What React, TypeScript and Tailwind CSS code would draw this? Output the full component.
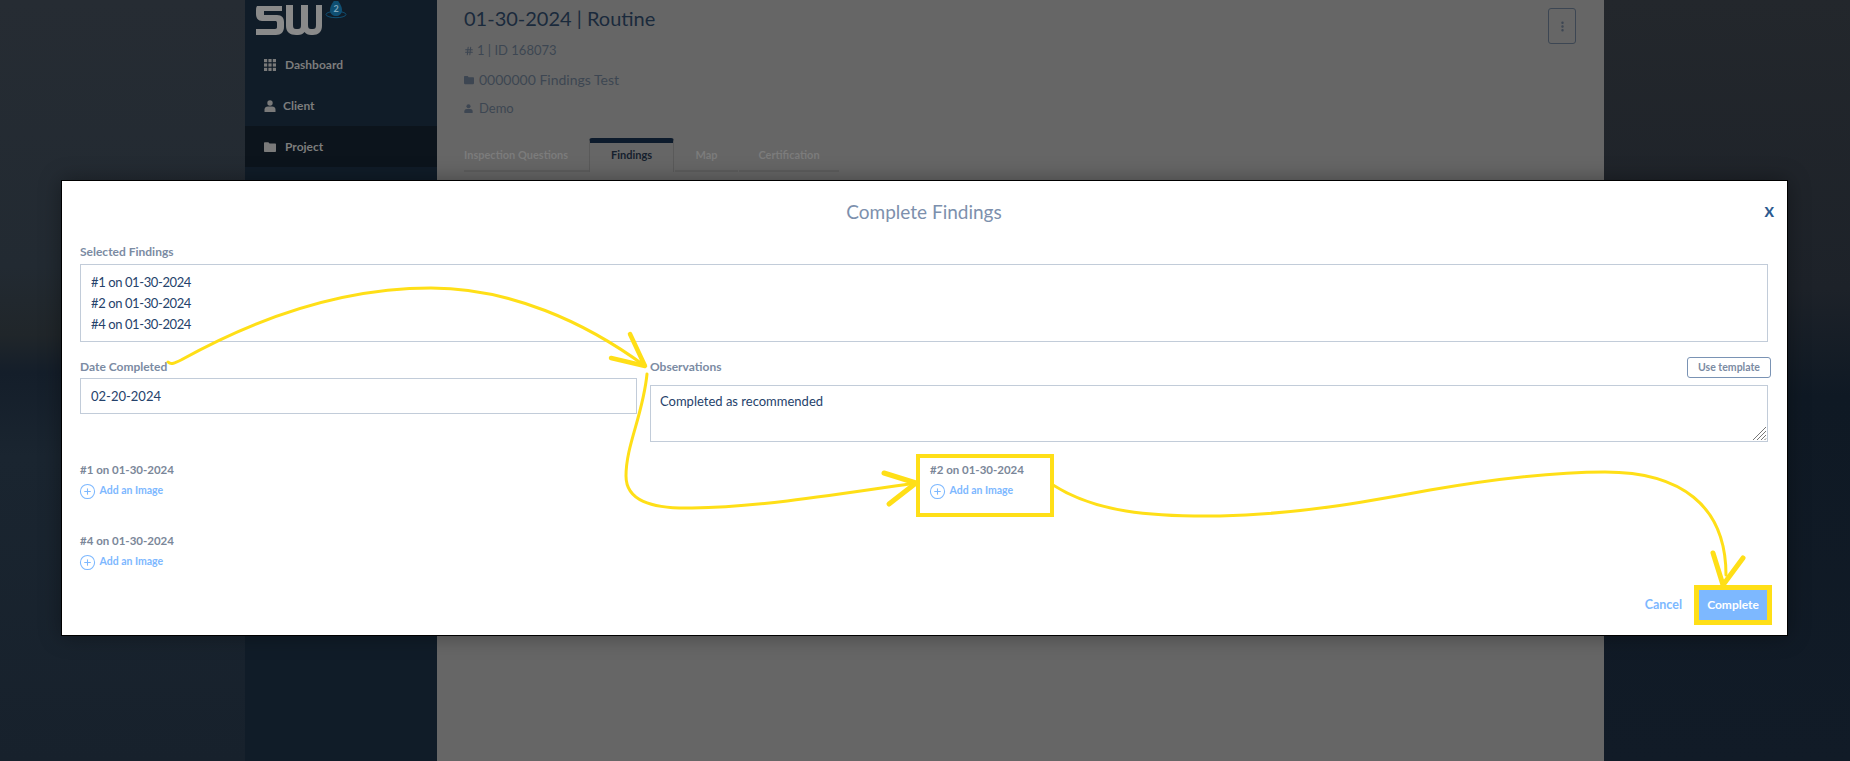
import { CirclePlus, EllipsisVertical, Hash } from "lucide-react";

const font = { fontFamily: '"Lato", "Open Sans", sans-serif' };

function GridIcon() {
  return (
    <svg width="12" height="12" viewBox="0 0 12 12" fill="#7a7a7a">
      {[0, 4.4, 8.8].map((y) =>
        [0, 4.4, 8.8].map((x) => <rect key={`${x}-${y}`} x={x} y={y} width="3.2" height="3.2" />)
      )}
    </svg>
  );
}

function UserIcon({ color, size = 12 }: { color: string; size?: number }) {
  return (
    <svg width={size} height={size} viewBox="0 0 12 12" fill={color}>
      <circle cx="6" cy="3" r="2.7" />
      <path d="M0.5 12V9.6C0.5 7.8 2 6.6 3.8 6.6H8.2C10 6.6 11.5 7.8 11.5 9.6V12Z" />
    </svg>
  );
}

function FolderIcon({ color, size = 12 }: { color: string; size?: number }) {
  return (
    <svg width={size} height={size} viewBox="0 0 12 12" fill={color}>
      <path d="M0 2.2C0 1.6 0.4 1.2 1 1.2H4.4L5.6 2.6H11C11.6 2.6 12 3 12 3.6V10C12 10.6 11.6 11 11 11H1C0.4 11 0 10.6 0 10Z" />
    </svg>
  );
}

function Logo() {
  return (
    <svg width="96" height="36" viewBox="0 0 96 36">
      <path
        d="M2 5H27V10H9V14H22C27 14 29 17 29 21V26C29 31 26 34 21 34H1V28H20C21.5 28 22 27 22 26V22C22 20.5 21.5 20 20 20H7C3 20 1 17 1 13V9C1 6 2 5 2 5Z"
        fill="#8a8a8a"
      />
      <path
        d="M31 4H38V24C38 27 39 28 41 28H43C45 28 46 27 46 24V4H53V24C53 27 54 28 56 28H58C60 28 61 27 61 24V4H67V25C67 31 63 34 58 34H56C53 34 51 33 49.5 31C48 33 46 34 43 34H41C35 34 31 31 31 25Z"
        fill="#8a8a8a"
      />
      <path d="M81 -3C84 1 87 5 87 9C87 13 84 15 81 15C78 15 75 13 75 9C75 5 78 1 81 -3Z" fill="#0f4f73" />
      <ellipse cx="81" cy="13.5" rx="10" ry="3.2" fill="none" stroke="#0f4f73" strokeWidth="1" />
      <text x="81" y="11" fontSize="9" fontWeight="700" fill="#7fa6bb" textAnchor="middle" style={font}>
        2
      </text>
    </svg>
  );
}

function NavItem({ icon, label, active, gap }: { icon: React.ReactNode; label: string; active?: boolean; gap: string }) {
  return (
    <div className={`h-[41px] pl-[19px] flex items-center ${gap} ${active ? "bg-[#0c141c]" : ""}`}>
      {icon}
      <span className="text-[12px] font-bold text-[#7d7d7d]">{label}</span>
    </div>
  );
}

function AddImage() {
  return (
    <div className="flex items-center gap-[4px] h-[14px] mt-[6px] text-[#7db8ff]">
      <CirclePlus size={17} strokeWidth={1.5} className="-ml-[1.5px]" />
      <span className="text-[10.5px] font-bold">Add an Image</span>
    </div>
  );
}

function FindingImage({ label, className }: { label: string; className?: string }) {
  return (
    <div className={className}>
      <div className="h-[16px] leading-[16px] text-[11.5px] font-bold text-[#7b8799]">{label}</div>
      <AddImage />
    </div>
  );
}

function Annotations() {
  const stroke = "#ffdf17";
  return (
    <svg className="absolute left-0 top-0 pointer-events-none" width="1850" height="761" fill="none" stroke={stroke} strokeLinecap="round" strokeLinejoin="round">
      <path strokeWidth="3" d="M168 362C171 365 175 363 181 360C262 315 345 288 431 288C510 288 585 322 645 366" />
      <path strokeWidth="4.5" d="M630 334L645 366L611 358" />
      <path strokeWidth="3" d="M647 374C643 415 626 445 626 476C626 500 650 509 692 508C760 507 840 494 916 483" />
      <path strokeWidth="5" d="M884 473L916 483L889 504" />
      <path strokeWidth="3" d="M1053 485C1095 512 1150 517 1220 516C1300 514 1365 502 1430 490C1500 478 1560 472 1605 472C1680 472 1726 505 1726 575" />
      <path strokeWidth="5" d="M1713 553L1723 585L1743 558" />
    </svg>
  );
}

export default function App() {
  return (
    <div className="relative w-[1850px] h-[761px] overflow-hidden flex" style={font}>
      <div className="w-[245px] bg-[linear-gradient(180deg,#262c33_0%,#222a32_35%,#20262a_44%,#141e2a_49%,#1a2530_60%,#17212c_100%)]" />

      <aside className="w-[192px] bg-[#101c28]">
        <div className="h-[44px] pl-[10px] pt-[1px]">
          <Logo />
        </div>
        <div>
          <NavItem icon={<GridIcon />} label="Dashboard" gap="gap-[9px]" />
          <NavItem icon={<UserIcon color="#7a7a7a" />} label="Client" gap="gap-[7px]" />
          <NavItem icon={<FolderIcon color="#7a7a7a" />} label="Project" active gap="gap-[9px]" />
        </div>
      </aside>

      <main className="w-[1167px] bg-[#666666] pl-[27px] pr-[28px] relative">
        <div className="flex justify-between">
          <div>
            <h1 className="h-[37px] leading-[37px] text-[20px] text-[#1a2a3c]">01-30-2024 | Routine</h1>
            <div className="flex flex-col">
              <div className="h-[28px] flex items-center gap-[3px] text-[13px] text-[#3d4652]">
                <Hash size={10} strokeWidth={2.5} />
                <span>1 | ID 168073</span>
              </div>
              <div className="h-[29px] flex items-center gap-[5px] text-[14px] text-[#3d4652]">
                <FolderIcon color="#3d4652" size={10} />
                <span>0000000 Findings Test</span>
              </div>
              <div className="h-[29px] flex items-center gap-[6px] text-[13px] text-[#3d4652]">
                <UserIcon color="#3d4652" size={9} />
                <span>Demo</span>
              </div>
            </div>
          </div>
          <div className="mt-[8px] w-[28px] h-[36px] border border-[#3c4653] rounded-[3px] flex items-center justify-center text-[#3c4653]">
            <EllipsisVertical size={13} strokeWidth={2.5} />
          </div>
        </div>

        <div className="mt-[15px] flex items-end h-[34px] text-[11px] font-bold text-[#7c7c7c]">
          <div className="w-[125px] h-[34px] flex flex-col justify-between">
            <span className="leading-[30px] mt-[2px]">Inspection Questions</span>
            <div className="h-[3px] bg-[#5d5d5d]" />
          </div>
          <div className="w-[85px] h-[34px] rounded-t-[3px] border-t-[5px] border-t-[#0d1b2c] border-x border-x-[#5a5a5a] text-center leading-[24px] text-[#15202d]">Findings</div>
          <div className="w-[63px] ml-[1px] h-[34px] flex flex-col justify-between items-center">
            <span className="leading-[30px] mt-[2px]">Map</span>
            <div className="h-[3px] bg-[#5d5d5d] w-full" />
          </div>
          <div className="w-[100px] ml-[1px] h-[34px] flex flex-col justify-between items-center">
            <span className="leading-[30px] mt-[2px]">Certification</span>
            <div className="h-[3px] bg-[#5d5d5d] w-full" />
          </div>
        </div>
      </main>

      <div className="flex-1 bg-[linear-gradient(180deg,#23272c_0%,#1d2229_38%,#0f1924_52%,#111b27_100%)]" />

      {/* modal dialog */}
      <section className="absolute left-[61px] top-[180px] w-[1727px] h-[456px] bg-white border border-black shadow-[0_0_20px_rgba(0,0,0,0.35)] pl-[18px] pr-[19px]">
        <div className="relative h-[62px] flex items-center justify-center">
          <h2 className="text-[19px] text-[#7d90ad]">Complete Findings</h2>
          <span className="absolute right-[-6px] top-[21px] text-[14px] leading-[20px] font-black text-[#2c5a8f]">X</span>
        </div>

        <label className="block h-[21px] leading-[18px] text-[12px] font-bold text-[#7b8ba3]">Selected Findings</label>
        <div className="h-[78px] border border-[#c2ccd9] pl-[10px] pt-[7px] text-[13px] leading-[21px] tracking-[-0.4px] text-[#25426b]">
          <div>#1 on 01-30-2024</div>
          <div>#2 on 01-30-2024</div>
          <div>#4 on 01-30-2024</div>
        </div>

        <div className="flex gap-[13px] mt-[16px]">
          <div className="w-[557px]">
            <label className="block h-[20px] leading-[18px] text-[12px] font-bold text-[#7b8ba3]">Date Completed</label>
            <div className="h-[36px] border border-[#c2ccd9] pl-[10px] pt-[2px] flex items-center text-[13px] text-[#25426b]">02-20-2024</div>
          </div>
          <div className="flex-1">
            <div className="flex items-start justify-between h-[21px]">
              <label className="h-[18px] leading-[18px] text-[12px] font-bold text-[#7b8ba3]">Observations</label>
              <button className="-mr-[3px] -mt-[1px] w-[84px] h-[21px] border border-[#7a93b4] rounded-[3px] text-[10.5px] font-bold text-[#7b8ba3]">Use template</button>
            </div>
            <div className="relative mt-[6px] h-[57px] border border-[#c2ccd9] pl-[9px] pt-[6px] text-[13px] leading-[18px] text-[#25426b]">
              Completed as recommended
              <svg className="absolute right-0 bottom-0" width="15" height="15" viewBox="0 0 15 15" stroke="#777" strokeWidth="1">
                <path d="M1 14L14 1M5 14L14 5M9 14L14 9M12.5 14L14 12.5" />
              </svg>
            </div>
          </div>
        </div>

        <div className="relative mt-[20px] h-[120px]">
          <FindingImage label="#1 on 01-30-2024" />
          <FindingImage label="#4 on 01-30-2024" className="mt-[35px]" />
          <div className="absolute left-[836px] top-[-8px] w-[138px] h-[63px] border-[4px] border-[#ffdf17] pl-[10px] pt-[4px]">
            <FindingImage label="#2 on 01-30-2024" />
          </div>
          <div className="absolute right-[-4px] top-[123px] flex items-center gap-[12px]">
            <span className="text-[12.5px] font-bold text-[#7db8ff]">Cancel</span>
            <button className="w-[78px] h-[40px] border-[5px] border-[#ffdf17] bg-[#7db8ff] text-[12px] font-bold text-white">Complete</button>
          </div>
        </div>
      </section>

      <Annotations />
    </div>
  );
}
